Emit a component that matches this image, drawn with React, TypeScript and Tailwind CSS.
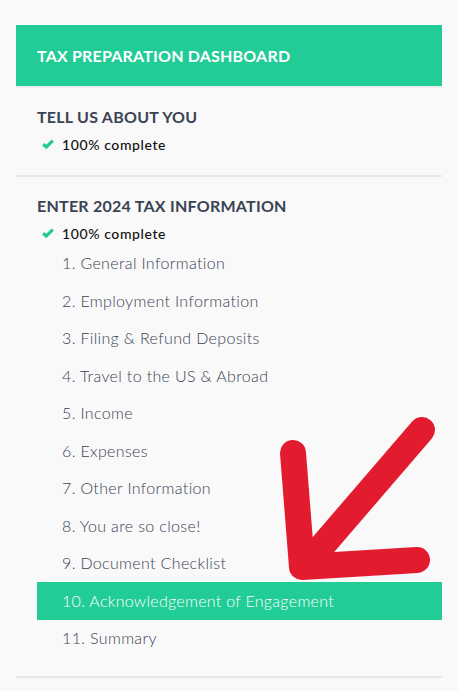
import React from 'react';

const steps = [
  '1. General Information',
  '2. Employment Information',
  '3. Filing & Refund Deposits',
  '4. Travel to the US & Abroad',
  '5. Income',
  '6. Expenses',
  '7. Other Information',
  '8. You are so close!',
  '9. Document Checklist',
  '10. Acknowledgement of Engagement',
  '11. Summary',
];

const ACTIVE = 9;

function Check() {
  return (
    <svg width="12" height="10" viewBox="0 0 12 10" className="shrink-0">
      <path d="M1.2 5.2 L4.3 8 L10.8 1.6" fill="none" stroke="#22c995" strokeWidth="3.2" strokeLinecap="butt" />
    </svg>
  );
}

function Complete() {
  return (
    <div className="mt-[7px] flex h-5 items-center pl-[5px] text-[14px] font-medium tracking-[0.6px] text-[#111]">
      <Check />
      <span className="ml-[8px]">100% complete</span>
    </div>
  );
}

export default function App() {
  return (
    <div className="relative min-h-[691px] bg-[#f9f9f9] px-4 pt-[25px] font-['Lato',sans-serif]">
      <div className="flex h-[61px] items-center bg-[#22cc96] pl-[21px] text-[16px] font-bold tracking-[0.2px] text-white">
        TAX PREPARATION DASHBOARD
      </div>
      <div className="h-[2px] bg-[#ececec]" />

      <section className="border-b-2 border-[#e8e8e8] pt-[19px] pb-[21px] pl-[21px]">
        <h2 className="h-5 text-[16px] leading-5 font-bold tracking-[0.25px] text-[#3a4354]">TELL US ABOUT YOU</h2>
        <Complete />
      </section>

      <section className="border-b-2 border-[#e8e8e8] pt-[19px] pb-[19px] pl-[21px]">
        <h2 className="h-5 text-[16px] leading-5 font-bold tracking-[0.25px] text-[#3a4354]">ENTER 2024 TAX INFORMATION</h2>
        <Complete />
        <ul className="mt-[1.5px]">
          {steps.map((s, i) => (
            <li
              key={s}
              className={
                i === ACTIVE
                  ? 'flex h-[37.5px] items-center bg-[#22cc96] pl-[25px] text-[16px] font-light tracking-[0.3px] text-white'
                  : 'flex h-[37.5px] items-center pl-[25px] text-[16px] font-light tracking-[0.35px] text-[#3a4255]'
              }
            >
              {s}
            </li>
          ))}
        </ul>
      </section>

      <svg className="pointer-events-none absolute top-0 left-0" width="458" height="691">
        <g fill="none" stroke="#e31b2f" strokeWidth="26" strokeLinecap="round" strokeLinejoin="round">
          <path d="M422 430 L305 566" />
          <path d="M293 453 L302 567 L417 560" />
        </g>
      </svg>
    </div>
  );
}
